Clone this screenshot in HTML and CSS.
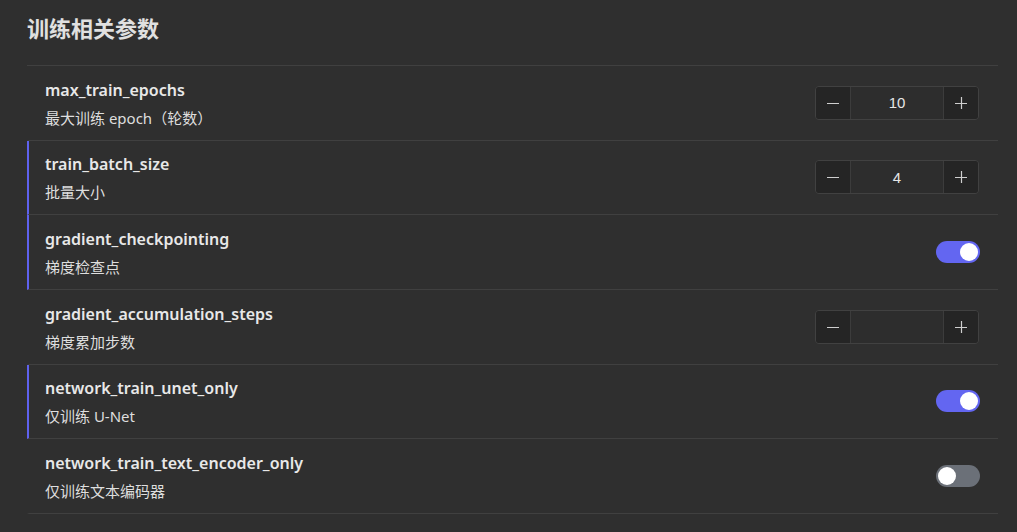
FILE: index.html
```html
<!DOCTYPE html>
<html lang="zh">
<head>
<meta charset="utf-8">
<link rel="stylesheet" href="styles.css">
</head>
<body>
<section class="panel">
  <h2 class="title">训练相关参数</h2>
  <div class="list">
    <div class="row">
      <div class="info"><div class="name">max_train_epochs</div><div class="desc">最大训练 epoch（轮数）</div></div>
      <div class="stepper">
        <button class="btn"><svg viewBox="0 0 12 12" width="12" height="12"><path d="M0 6.5H12"/></svg></button>
        <div class="val">10</div>
        <button class="btn"><svg viewBox="0 0 12 12" width="12" height="12"><path d="M0 6.5H12M6.5 0V12"/></svg></button>
      </div>
    </div>
    <div class="row mod">
      <div class="info"><div class="name">train_batch_size</div><div class="desc">批量大小</div></div>
      <div class="stepper">
        <button class="btn"><svg viewBox="0 0 12 12" width="12" height="12"><path d="M0 6.5H12"/></svg></button>
        <div class="val">4</div>
        <button class="btn"><svg viewBox="0 0 12 12" width="12" height="12"><path d="M0 6.5H12M6.5 0V12"/></svg></button>
      </div>
    </div>
    <div class="row mod">
      <div class="info"><div class="name">gradient_checkpointing</div><div class="desc">梯度检查点</div></div>
      <div class="toggle on"><span class="knob"></span></div>
    </div>
    <div class="row">
      <div class="info"><div class="name">gradient_accumulation_steps</div><div class="desc">梯度累加步数</div></div>
      <div class="stepper">
        <button class="btn"><svg viewBox="0 0 12 12" width="12" height="12"><path d="M0 6.5H12"/></svg></button>
        <div class="val"></div>
        <button class="btn"><svg viewBox="0 0 12 12" width="12" height="12"><path d="M0 6.5H12M6.5 0V12"/></svg></button>
      </div>
    </div>
    <div class="row mod">
      <div class="info"><div class="name">network_train_unet_only</div><div class="desc">仅训练 U-Net</div></div>
      <div class="toggle on"><span class="knob"></span></div>
    </div>
    <div class="row">
      <div class="info"><div class="name">network_train_text_encoder_only</div><div class="desc">仅训练文本编码器</div></div>
      <div class="toggle"><span class="knob"></span></div>
    </div>
  </div>
</section>
</body>
</html>
```

FILE: styles.css
```css
html, body {
  margin: 0;
  padding: 0;
  background: #2f2f2f;
  font-family: "Noto Sans", "Noto Sans CJK SC", sans-serif;
  color: #e4e4e4;
}
.panel {
  padding: 14px 19px 0 27px;
}
.title {
  margin: 0;
  font-size: 22px;
  line-height: 28px;
  font-weight: 700;
  color: #e0e0e0;
  padding-bottom: 23px;
  border-bottom: 1px solid #404040;
}
.row {
  display: flex;
  align-items: center;
  justify-content: space-between;
  height: 73.67px;
  border-bottom: 1px solid #404040;
  border-left: 2px solid transparent;
  padding: 0 18px 0 16px;
}
.row.mod {
  border-left-color: #5f62ee;
}
.info {
  display: flex;
  flex-direction: column;
  gap: 6px;
}
.name {
  font-size: 16px;
  line-height: 24px;
  font-weight: 600;
  color: #e8e8e8;
}
.desc {
  font-size: 15px;
  line-height: 20px;
  color: #dedede;
}
.stepper {
  display: flex;
  width: 164px;
  height: 34px;
  box-sizing: border-box;
  border: 1px solid #414141;
  border-radius: 4px;
  overflow: hidden;
  margin-right: 1px;
}
.btn {
  width: 35px;
  border: none;
  background: #252525;
  padding: 0;
  display: flex;
  align-items: center;
  justify-content: center;
}
.btn svg {
  stroke: #cfcfcf;
  stroke-width: 1.2;
  fill: none;
}
.btn:first-child { border-right: 1px solid #3c3c3c; }
.btn:last-child { border-left: 1px solid #3c3c3c; }
.val {
  flex: 1;
  background: #2d2d2d;
  display: flex;
  align-items: center;
  justify-content: center;
  font-family: "Liberation Sans", sans-serif;
  font-size: 15px;
  color: #e6e6e6;
}
.toggle {
  width: 44px;
  height: 22px;
  border-radius: 11px;
  background: #6b7078;
  position: relative;
}
.toggle.on { background: #6366f1; }
.knob {
  position: absolute;
  top: 2px;
  left: 2px;
  width: 18px;
  height: 18px;
  border-radius: 50%;
  background: #fff;
}
.toggle.on .knob { left: 24px; }
```
